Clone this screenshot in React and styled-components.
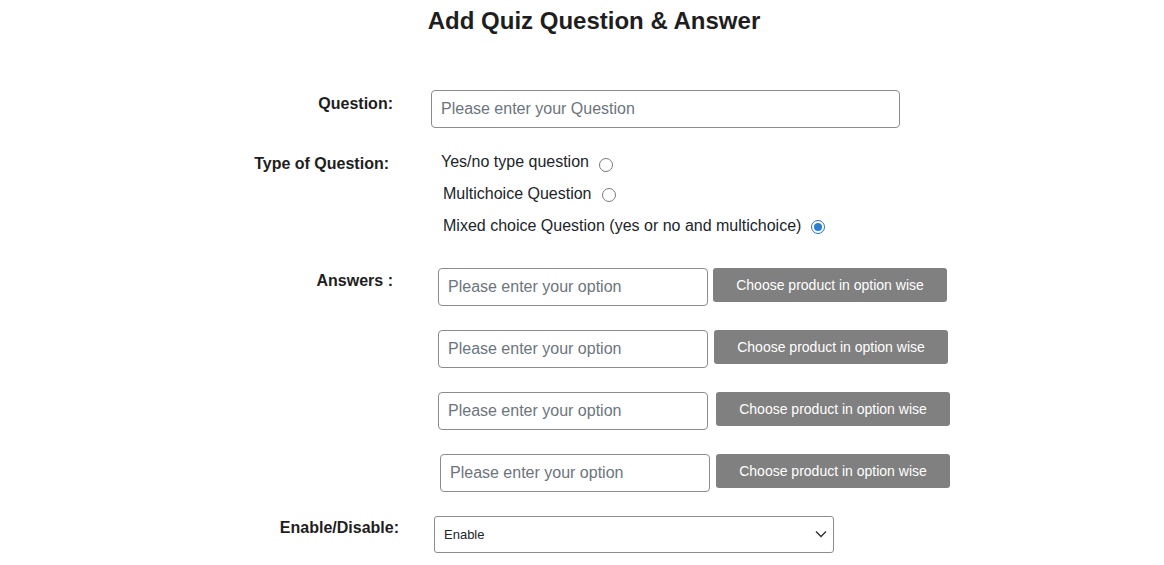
import React from 'react';
import styled, { createGlobalStyle } from 'styled-components';

const GlobalStyle = createGlobalStyle`
  body {
    margin: 0;
    background: #fff;
    font-family: "Liberation Sans", "Open Sans", sans-serif;
    color: #212529;
  }
`

const Page = styled.div`
  width: 1164px;
  min-height: 565px;
  padding-top: 6px;
  box-sizing: border-box;
`

const Title = styled.h2`
  margin: 0 0 55px;
  padding-left: 24px;
  text-align: center;
  font-size: 24px;
  line-height: 29px;
  font-weight: 700;
  color: #1e1e1e;
`

const Row = styled.div`
  display: flex;
  align-items: flex-start;
  margin-bottom: ${p => p.gap || 0}px;
`

const Label = styled.div`
  width: ${p => p.right || 393}px;
  flex-shrink: 0;
  text-align: right;
  font-size: 16px;
  font-weight: 700;
  line-height: 24px;
  padding-top: ${p => p.top || 0}px;
  color: #1e1e1e;
`

const Field = styled.div`
  margin-left: ${p => p.indent}px;
  display: flex;
  flex-direction: column;
`

const TextInput = styled.input`
  box-sizing: border-box;
  width: ${p => p.w}px;
  height: 38px;
  border: 1px solid #8c8c8c;
  border-radius: 4px;
  padding: 0 9px;
  font-family: inherit;
  font-size: 16px;
  color: #212529;
  outline: none;
  &::placeholder {
    color: #6c757d;
  }
`

const RadioLine = styled.label`
  display: flex;
  align-items: center;
  font-size: 16px;
  line-height: 24px;
  height: 24px;
  margin-bottom: 8px;
  margin-left: ${p => p.indent || 0}px;
  color: #212529;
`

const Radio = styled.span`
  width: 14px;
  height: 14px;
  box-sizing: border-box;
  border-radius: 50%;
  border: 1px solid ${p => (p.checked ? '#2f6fc0' : '#7a7a7a')};
  margin-left: 10px;
  margin-top: ${p => p.drop || 0}px;
  display: flex;
  align-items: center;
  justify-content: center;
  &::after {
    content: '';
    display: ${p => (p.checked ? 'block' : 'none')};
    width: 8px;
    height: 8px;
    border-radius: 50%;
    background: #2f7dd1;
  }
`

const AnswerRow = styled.div`
  display: flex;
  align-items: flex-start;
  margin-left: ${p => p.shift || 0}px;
  margin-bottom: 24px;
`

const ChooseButton = styled.button`
  height: 34px;
  width: 234px;
  margin-left: ${p => p.gap}px;
  border: none;
  border-radius: 3px;
  background: #808080;
  color: #fff;
  font-family: inherit;
  font-size: 14px;
  cursor: pointer;
`

const SelectWrap = styled.div`
  position: relative;
  width: 400px;
`

const Select = styled.select`
  appearance: none;
  box-sizing: border-box;
  width: 400px;
  height: 37px;
  border: 1px solid #8c8c8c;
  border-radius: 3px;
  background: #fff;
  padding: 0 9px;
  font-family: inherit;
  font-size: 13px;
  color: #212529;
`

const Chevron = styled.svg`
  position: absolute;
  right: 7px;
  top: 13px;
  pointer-events: none;
`

const answers = [
  { shift: 0, gap: 5 },
  { shift: 0, gap: 6 },
  { shift: 0, gap: 8 },
  { shift: 2, gap: 6 },
]

const App = () => {
  return (
    <Page>
      <GlobalStyle />
      <Title>Add Quiz Question &amp; Answer</Title>

      <Row gap={22}>
        <Label top={2}>Question:</Label>
        <Field indent={38}>
          <TextInput w={469} placeholder="Please enter your Question" />
        </Field>
      </Row>

      <Row gap={22}>
        <Label right={389} top={2}>Type of Question:</Label>
        <Field indent={52}>
          <RadioLine>Yes/no type question<Radio drop={5} /></RadioLine>
          <RadioLine indent={2}>Multichoice Question<Radio drop={1} /></RadioLine>
          <RadioLine indent={2}>Mixed choice Question (yes or no and multichoice)<Radio checked drop={1} /></RadioLine>
        </Field>
      </Row>

      <Row>
        <Label top={1}>Answers :</Label>
        <Field indent={45}>
          {answers.map((a, i) => (
            <AnswerRow key={i} shift={a.shift}>
              <TextInput w={270} placeholder="Please enter your option" />
              <ChooseButton gap={a.gap}>Choose product in option wise</ChooseButton>
            </AnswerRow>
          ))}
        </Field>
      </Row>

      <Row>
        <Label right={399} top={0}>Enable/Disable:</Label>
        <Field indent={35}>
          <SelectWrap>
            <Select defaultValue="enable">
              <option value="enable">Enable</option>
              <option value="disable">Disable</option>
            </Select>
            <Chevron width="12" height="10" viewBox="0 0 12 10">
              <path d="M1 2.5 L6 7.5 L11 2.5" fill="none" stroke="#333" strokeWidth="1.4" />
            </Chevron>
          </SelectWrap>
        </Field>
      </Row>
    </Page>
  )
}

export default App;
